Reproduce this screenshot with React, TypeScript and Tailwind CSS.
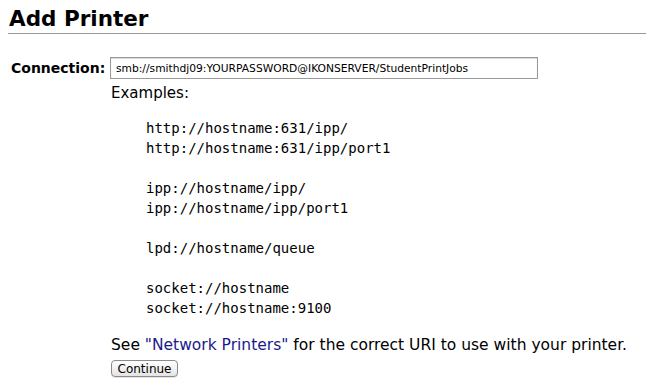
import { useState } from 'react';

const EXAMPLES = [
  'http://hostname:631/ipp/',
  'http://hostname:631/ipp/port1',
  '',
  'ipp://hostname/ipp/',
  'ipp://hostname/ipp/port1',
  '',
  'lpd://hostname/queue',
  '',
  'socket://hostname',
  'socket://hostname:9100',
];

export default function App() {
  const [uri, setUri] = useState('smb://smithdj09:YOURPASSWORD@IKONSERVER/StudentPrintJobs');

  return (
    <div className="min-h-[387px] bg-white pl-2 pr-px pt-[6px] font-['DejaVu_Sans',sans-serif] text-black">
      <h1 className="border-b border-[#999] pb-px pl-px text-[21.5px] font-bold leading-[26px]">Add Printer</h1>

      <form onSubmit={(e) => e.preventDefault()} className="pt-[23px]">
        <div className="flex items-center">
          <label htmlFor="device_uri" className="w-[102px] pl-[3px] text-[14px] font-bold leading-[20px]">
            Connection:
          </label>
          <input
            id="device_uri"
            type="text"
            value={uri}
            onChange={(e) => setUri(e.target.value)}
            className="h-[22px] w-[428px] border border-[#9a9a9a] bg-white px-[5px] text-[10.7px] text-black shadow-[inset_0_1px_1px_rgba(0,0,0,0.15)] outline-none"
          />
        </div>

        <div className="pl-[103px]">
          <p className="mt-[4px] text-[15px] leading-[20px]">Examples:</p>
          <pre className="mt-[15px] pl-[35px] font-['DejaVu_Sans_Mono',monospace] text-[14px] leading-[20px]">
            {EXAMPLES.map((line, i) => (
              <div key={i} className="h-[20px]">{line}</div>
            ))}
          </pre>
          <p className="mt-[17px] text-[15.5px] leading-[20px]">
            See <a href="#" className="text-[#1a1a8c]">"Network Printers"</a> for the correct URI to use with your printer.
          </p>
          <button
            type="submit"
            className="mt-[5px] flex h-[17px] w-[67px] items-center justify-center rounded-[4px] border border-[#8a8a8a] bg-gradient-to-b from-white to-[#e4e4e4] text-[12px] leading-none shadow-[0_1px_0_rgba(0,0,0,0.1)]"
          >
            Continue
          </button>
        </div>
      </form>
    </div>
  );
}
